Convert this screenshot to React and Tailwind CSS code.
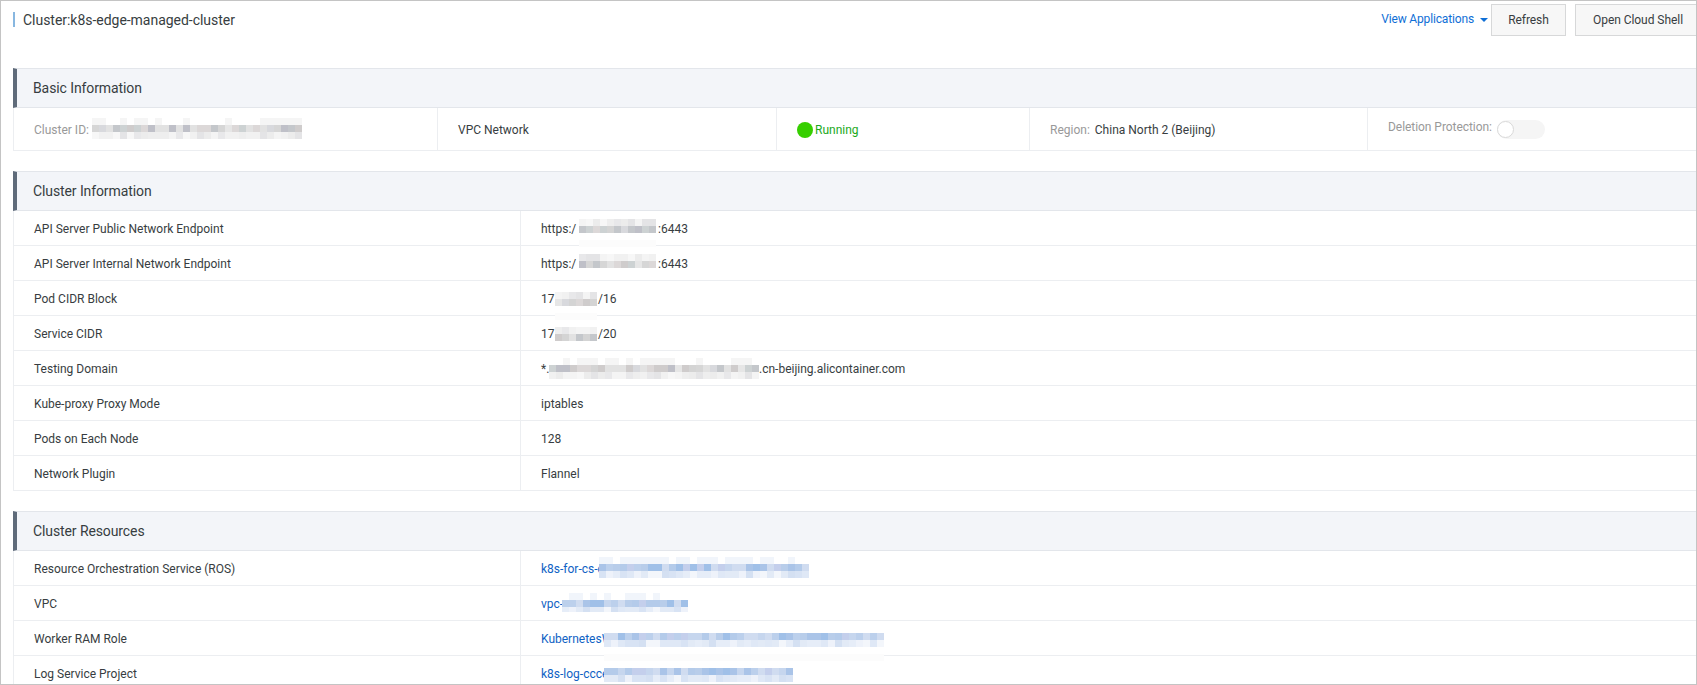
const GREY = ['#e2e2e2','#d6d6d6','#cfcccc','#d8d9dd','#c4c7cb','#e6e6e6','#dcd8d8','#cdd2d3','#bfc0c8','#d4d4d4'];
const GREYL = ['#f1f1f1','#ececec','#e8e8ea','#f4f4f4','#eeeeee','#e4e4e6','#f7f7f7'];
const BLUE = ['#bcd0ec','#c6d6ee','#aac4e8','#d0dcf0','#b4cbea','#a0c0e8','#c4cfec','#b8cdea'];
const BLUEL = ['#dfe8f6','#e6edf8','#d8e3f4','#eef2fa','#e2eaf6','#f3f6fb','#d4e0f2'];
const hash = (s) => {
  let v = (s * 2654435761) >>> 0;
  v ^= v >>> 13;
  v = (v * 1597334677) >>> 0;
  return (v ^ (v >>> 16)) >>> 0;
};

function Pixels({ w, h, blue, seed, top, faintTop, faintBelow, invert }) {
  const cols = Math.ceil(w / 7);
  const strong = blue ? BLUE : GREY;
  const light = blue ? BLUEL : GREYL;
  const rects = [];
  const start = faintTop ? 7 : 0;
  for (let c = 0; c < cols; c++) {
    if (faintTop && hash(seed * 31 + c) % 2 === 0) {
      rects.push(<rect key={`t${c}`} x={c * 7} y={0} width={7} height={7} fill={blue ? '#f1f5fb' : '#f5f5f5'} />);
    }
    [0, 1].forEach((r) => {
      const useStrong = invert ? r === 1 : r === 0;
      const pal = useStrong ? strong : light;
      rects.push(<rect key={`${c}-${r}`} x={c * 7} y={start + r * 7} width={7} height={7} fill={pal[hash(seed * 97 + c * 13 + r * 7) % pal.length]} />);
    });
  }
  const body = start + 14;
  if (faintBelow) rects.push(<rect key="f" x={0} y={body + 7} width={w} height={7} fill="#fcfcfc" />);
  const total = h || body + (faintBelow ? 14 : 0);
  return (
    <svg width={w} height={total} viewBox={`0 0 ${w} ${total}`} shapeRendering="crispEdges" className="shrink-0 self-start" style={{ marginTop: top }}>
      {rects}
    </svg>
  );
}

function SectionHeader({ title }) {
  return (
    <div className="h-[40px] border-t border-b border-t-[#e3e6eb] border-b-[#e3e6eb] border-l-4 border-l-[#5f6b7a] bg-[#f3f5f9] pl-[16px] flex items-center text-[14px] tracking-[-0.1px] text-[#373d41]">
      {title}
    </div>
  );
}

function Row({ label, children, link }) {
  return (
    <div className="h-[35px] flex border-b border-l border-[#eceef1] shrink-0">
      <div className="w-[507px] shrink-0 border-r border-[#eceef1] pl-[20px] pt-[2px] flex items-center text-[#373d41]">{label}</div>
      <div className={`pl-[20px] pt-[2px] flex items-center whitespace-nowrap ${link ? 'text-[#0f62c4]' : 'text-[#373d41]'}`}>{children}</div>
    </div>
  );
}

export default function App() {
  return (
    <div className="w-[1697px] h-[685px] overflow-hidden bg-white border border-[#c4c4c4] font-['Roboto',sans-serif] text-[12px]">
      <div className="h-[67px] flex items-start">
        <div className="ml-[12px] mt-[11px] w-[2px] h-[15px] bg-[#88b7e0]" />
        <div className="ml-[8px] mt-[9px] text-[14px] leading-[20px] tracking-[-0.03px] text-[#373d41]">Cluster:k8s-edge-managed-cluster</div>
        <div className="ml-auto flex items-start">
          <div className="mt-[9px] leading-[18px] flex items-center text-[#0f6fd6] tracking-[-0.15px]">
            View Applications
            <svg width="8" height="4" viewBox="0 0 8 4" className="ml-[6px] mt-[2px]"><path d="M0 0h8L4 4z" fill="#0f6fd6" /></svg>
          </div>
          <button className="ml-[3px] mt-[3px] w-[75px] h-[32px] border border-[#d7d8d9] bg-[#f7f7f7] text-[#373d41] tracking-[-0.1px]">Refresh</button>
          <button className="ml-[9px] mt-[3px] w-[121px] h-[32px] pl-[4px] border border-[#d7d8d9] border-r-0 bg-[#f7f7f7] text-[#373d41] tracking-[-0.05px]">Open Cloud Shell</button>
        </div>
      </div>

      <div className="ml-[12px]">
        <SectionHeader title="Basic Information" />
        <div className="h-[43px] flex border-b border-l border-[#eceef1] text-[#373d41]">
          <div className="w-[424px] shrink-0 border-r border-[#eceef1] pl-[20px] pt-[2px] flex items-center text-[#999]">
            <span className="w-[58px]">Cluster ID:</span>
            <Pixels w={210} seed={3} top={8} faintTop />
          </div>
          <div className="w-[339px] shrink-0 border-r border-[#eceef1] pl-[20px] pt-[2px] flex items-center">VPC Network</div>
          <div className="w-[253px] shrink-0 border-r border-[#eceef1] pl-[20px] pt-[2px] flex items-center text-[#1ba91b]">
            <span className="w-[16px] h-[16px] rounded-full bg-[#36cf00] mr-[2px]" />Running
          </div>
          <div className="w-[338px] shrink-0 border-r border-[#eceef1] pl-[20px] pt-[2px] flex items-center">
            <span className="text-[#999] mr-[5px]">Region:</span>China North 2 (Beijing)
          </div>
          <div className="pl-[20px] flex items-start pt-[10px] leading-[18px] text-[#999] tracking-[-0.05px]">
            Deletion Protection:
            <span className="ml-[5px] mt-[2px] w-[48px] h-[19px] rounded-full bg-[#f5f5f5] relative">
              <span className="absolute left-0 top-[1px] w-[17px] h-[17px] rounded-full bg-white border border-[#d9d9d9]" />
            </span>
          </div>
        </div>

        <div className="h-[20px]" />
        <SectionHeader title="Cluster Information" />
        <Row label="API Server Public Network Endpoint"><span className="w-[38px]">https:/</span><Pixels w={77} seed={5} top={6} faintBelow invert /><span className="ml-[2px]">:6443</span></Row>
        <Row label="API Server Internal Network Endpoint"><span className="w-[38px]">https:/</span><Pixels w={77} seed={6} top={6} invert /><span className="ml-[2px]">:6443</span></Row>
        <Row label="Pod CIDR Block"><span className="w-[14px]">17.</span><Pixels w={42} seed={7} top={9} faintBelow invert /><span className="ml-[1px]">/16</span></Row>
        <Row label="Service CIDR"><span className="w-[14px]">17.</span><Pixels w={42} seed={8} top={9} invert /><span className="ml-[1px]">/20</span></Row>
        <Row label="Testing Domain"><span className="w-[8px]">*.</span><Pixels w={210} seed={9} top={5} faintTop />.cn-beijing.alicontainer.com</Row>
        <Row label="Kube-proxy Proxy Mode">iptables</Row>
        <Row label="Pods on Each Node">128</Row>
        <Row label="Network Plugin">Flannel</Row>

        <div className="h-[20px]" />
        <SectionHeader title="Cluster Resources" />
        <Row link label="Resource Orchestration Service (ROS)"><span className="w-[58px]">k8s-for-cs-c</span><Pixels w={210} blue seed={11} top={4} faintTop /></Row>
        <Row link label="VPC"><span className="w-[21px]">vpc-</span><Pixels w={126} h={19} blue seed={12} top={5} faintTop /></Row>
        <Row link label="Worker RAM Role"><span className="w-[63px]">KubernetesW</span><Pixels w={280} blue seed={13} top={10} faintBelow /></Row>
        <Row link label="Log Service Project"><span className="w-[63px]">k8s-log-ccce</span><Pixels w={189} blue seed={14} top={10} /></Row>
      </div>
    </div>
  );
}
